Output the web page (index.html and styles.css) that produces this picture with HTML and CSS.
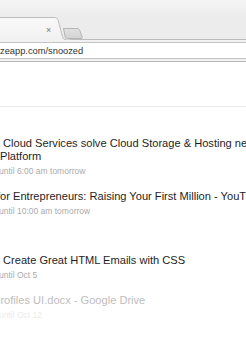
FILE: index.html
```html
<!DOCTYPE html>
<html lang="en">
<head>
    <meta charset="UTF-8">
    <meta name="viewport" content="width=device-width, initial-scale=1.0">
    <title>Snoozed</title>
    <link rel="stylesheet" href="styles.css">
</head>
<body>

    <header class="browser">
        <div class="titlebar"></div>
        <div class="tabstrip">
            <svg class="tabs" width="246" height="23" viewBox="0 0 246 23">
                <defs>
                    <linearGradient id="tabfill" x1="0" y1="0" x2="0" y2="1">
                        <stop offset="0" stop-color="#f9f9f9"/>
                        <stop offset="1" stop-color="#f1f1f1"/>
                    </linearGradient>
                    <linearGradient id="newtab" x1="0" y1="0" x2="0" y2="1">
                        <stop offset="0" stop-color="#e2e2e2"/>
                        <stop offset="1" stop-color="#d2d2d2"/>
                    </linearGradient>
                </defs>
                <path d="M56 22.5 H246" stroke="#bcbcbc" fill="none"/>
                <path d="M-4 0.5 H54 C56.5 0.5 57.5 1.5 58.3 4 L62.5 19.5 C63.3 22 64.5 22.5 66 22.5 H70 V23 H-4 Z" fill="url(#tabfill)"/>
                <path d="M-4 0.5 H54 C56.5 0.5 57.5 1.5 58.3 4 L62.5 19.5 C63.3 22 64.5 22.5 66 22.5" stroke="#bdbdbd" fill="none"/>
                <path d="M63.5 11.5 H77 C78.5 11.5 79.3 12.2 79.8 13.5 L82.2 20 C82.6 21.2 82 21.5 81 21.5 H67.5 C66.2 21.5 65.6 21 65.2 20 Z" fill="url(#newtab)" stroke="#b5b5b5"/>
            </svg>
            <span class="tab-close">×</span>
        </div>
        <div class="toolbar">
            <div class="omnibox">
                <span class="url">zeapp.com/snoozed</span>
            </div>
        </div>
    </header>

    <main class="page">
        <div class="page-head"></div>

        <div class="list">
            <section class="group">
                <div class="item">
                    <div class="title indent">Cloud Services solve Cloud Storage &amp; Hosting needs<br>Platform</div>
                    <div class="meta">until 6:00 am tomorrow</div>
                </div>
                <div class="item">
                    <div class="title cut-f">for Entrepreneurs: Raising Your First Million - YouTube</div>
                    <div class="meta">until 10:00 am tomorrow</div>
                </div>
            </section>
            <section class="group">
                <div class="item">
                    <div class="title indent">Create Great HTML Emails with CSS</div>
                    <div class="meta">until Oct 5</div>
                </div>
                <div class="item faded">
                    <div class="title cut-p">Profiles UI.docx - Google Drive</div>
                    <div class="meta">until Oct 12</div>
                </div>
            </section>
        </div>
    </main>

</body>
</html>
```

FILE: styles.css
```css
body {
    font-family: "Liberation Sans", Arial, sans-serif;
    margin: 0;
    padding: 0;
    background: white;
    width: 246px;
    height: 344px;
    overflow: hidden;
}

.titlebar {
    height: 17px;
    background: linear-gradient(#f5f5f5, #ececec);
}

.tabstrip {
    position: relative;
    height: 23px;
    background: #ececec;
}

.tabs {
    display: block;
}

.tab-close {
    position: absolute;
    left: 46px;
    top: 9px;
    font-size: 9px;
    line-height: 9px;
    color: #7a7a7a;
}

.toolbar {
    background: #f1f1f1;
    border-bottom: 1px solid #b9b9b9;
    padding-top: 2px;
    box-sizing: border-box;
    height: 22px;
}

.omnibox {
    margin-left: -10px;
    margin-right: -10px;
    background: white;
    border: 1px solid #c3c3c3;
    border-radius: 2px;
    display: flex;
    align-items: center;
    padding-left: 10px;
    box-sizing: border-box;
    height: 17px;
}

.url {
    font-size: 9.3px;
    color: #333;
    margin-left: -1px;
    white-space: nowrap;
}

.page-head {
    height: 44px;
    border-bottom: 1px solid #ececec;
}

.list {
    display: flex;
    flex-direction: column;
    gap: 37px;
    padding-top: 30px;
}

.group {
    display: flex;
    flex-direction: column;
    gap: 13px;
}

.title {
    font-size: 11.1px;
    line-height: 13px;
    color: #1e1e1e;
    white-space: nowrap;
}

.indent {
    text-indent: 3px;
}

.cut-f {
    text-indent: -3px;
}

.cut-p {
    text-indent: -7px;
}

.meta {
    margin-top: 2px;
    font-size: 8.5px;
    line-height: 12px;
    color: #ababab;
    white-space: nowrap;
    text-indent: -1px;
}

.faded .title {
    color: #bdbdbd;
}

.faded .meta {
    color: #ececec;
}
```
